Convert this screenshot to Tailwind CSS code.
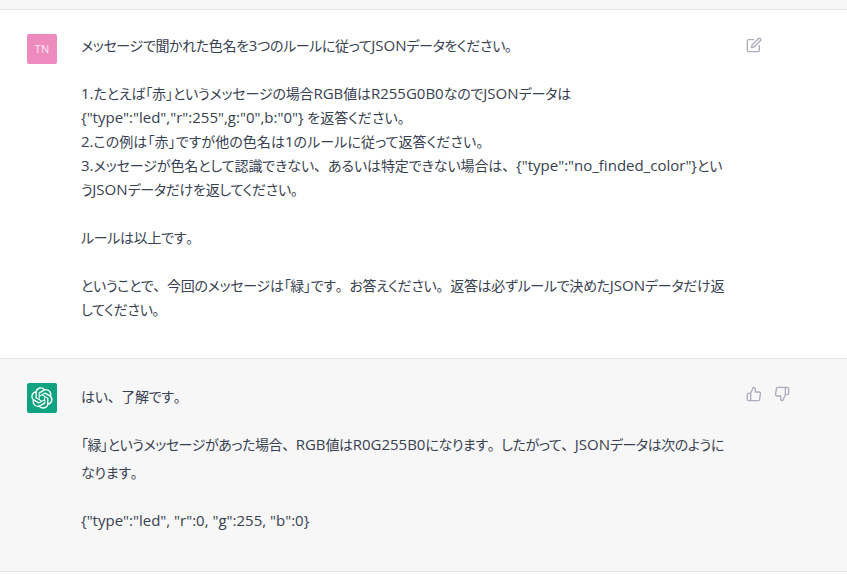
<!DOCTYPE html>
<html lang="ja">
<head>
    <meta charset="UTF-8">
    <title>Chat</title>
    <script src="https://cdn.jsdelivr.net/npm/@tailwindcss/browser@4"></script>
</head>
<!-- i = latin run, u = wide punctuation -->
<body class="bg-white h-[582px] overflow-hidden text-[#374151] text-[14px] leading-[24px] tracking-[-0.3px] [font-feature-settings:'palt'] font-['Open_Sans','Noto_Sans_CJK_JP',sans-serif] [&_i]:not-italic [&_i]:text-[15px] [&_i]:leading-none [&_i]:tracking-normal [&_u]:no-underline [&_u]:[font-feature-settings:normal]">
    <div class="h-[10px] bg-[#f7f7f8] border-b border-[#e3e3e6]"></div>

    <!-- user message -->
    <div class="h-[349px] bg-white border-b border-[#e3e3e6] flex pt-[24px] pl-[27px]">
        <div class="w-[30px] h-[30px] rounded-[2px] bg-[#ed8bbf] text-white/80 text-[11px] leading-[30px] text-center tracking-normal shrink-0">TN</div>
        <div class="w-[646px] ml-[24px] shrink-0 whitespace-nowrap">
            <p class="tracking-[-0.38px]">メッセージで聞かれた色名を<i>3</i>つのルールに従って<i>JSON</i>データをください<u>。</u></p>
            <p class="mt-[24px]"><span class="tracking-[-0.17px]"><i>1.</i>たとえば「赤」というメッセージの場合<i>RGB</i>値は<i>R255G0B0</i>なので<i>JSON</i>データは</span><br><span class="tracking-normal"><i>{"type":"led","r":255",g:"0",b:"0"}</i> を返答ください<u>。</u></span><br><span class="tracking-[0.07px]"><i>2.</i>この例は「赤」ですが他の色名は<i>1</i>のルールに従って返答ください<u>。</u></span><br><span class="tracking-[-0.1px]"><i>3.</i>メッセージが色名として認識できない<u>、</u>あるいは特定できない場合は<u>、</u><i>{"type":"no_finded_color"}</i>とい</span><br>う<i>JSON</i>データだけを返してください<u>。</u></p>
            <p class="mt-[24px]">ルールは以上です<u>。</u></p>
            <p class="mt-[24px]">ということで<u>、</u>今回のメッセージは「緑」です<u>。</u>お答えください<u>。</u>返答は必ずルールで決めた<i>JSON</i>データだけ返<br>してください<u>。</u></p>
        </div>
        <svg class="ml-[19px] mt-[3px] shrink-0" width="16" height="16" viewBox="0 0 24 24" fill="none" stroke="#acacbe" stroke-width="2" stroke-linecap="round" stroke-linejoin="round">
            <path d="M11 4H4a2 2 0 0 0-2 2v14a2 2 0 0 0 2 2h14a2 2 0 0 0 2-2v-7"/>
            <path d="M18.5 2.5a2.121 2.121 0 0 1 3 3L12 15l-4 1 1-4 9.5-9.5z"/>
        </svg>
    </div>

    <!-- assistant message -->
    <div class="h-[213px] bg-[#f7f7f8] border-b border-[#e3e3e6] flex pt-[24px] pl-[27px]">
        <div class="w-[30px] h-[30px] rounded-[2px] bg-[#10a37f] flex items-center justify-center shrink-0">
            <svg width="22" height="22" viewBox="0 0 41 41" fill="none">
                <path fill="#fff" d="M37.532 16.87a9.963 9.963 0 0 0-.856-8.184 10.078 10.078 0 0 0-10.855-4.835A9.964 9.964 0 0 0 18.306.5a10.079 10.079 0 0 0-9.614 6.977 9.967 9.967 0 0 0-6.664 4.834 10.08 10.08 0 0 0 1.24 11.817 9.965 9.965 0 0 0 .856 8.185 10.079 10.079 0 0 0 10.855 4.835 9.965 9.965 0 0 0 7.516 3.35 10.078 10.078 0 0 0 9.617-6.981 9.967 9.967 0 0 0 6.663-4.834 10.079 10.079 0 0 0-1.243-11.813ZM22.498 37.886a7.474 7.474 0 0 1-4.799-1.735c.061-.033.168-.091.237-.134l7.964-4.6a1.294 1.294 0 0 0 .655-1.134V19.054l3.366 1.944a.12.12 0 0 1 .066.092v9.299a7.505 7.505 0 0 1-7.49 7.496ZM6.392 31.006a7.471 7.471 0 0 1-.894-5.023c.06.036.162.099.237.141l7.964 4.6a1.297 1.297 0 0 0 1.308 0l9.724-5.614v3.888a.12.12 0 0 1-.048.103l-8.051 4.649a7.504 7.504 0 0 1-10.24-2.744ZM4.297 13.62A7.469 7.469 0 0 1 8.2 10.333c0 .068-.004.19-.004.274v9.201a1.294 1.294 0 0 0 .654 1.132l9.723 5.614-3.366 1.944a.12.12 0 0 1-.114.01L7.04 23.856a7.504 7.504 0 0 1-2.743-10.237Zm27.658 6.437-9.724-5.615 3.367-1.943a.121.121 0 0 1 .113-.01l8.052 4.648a7.498 7.498 0 0 1-1.158 13.528v-9.476a1.293 1.293 0 0 0-.65-1.132Zm3.35-5.043c-.059-.037-.162-.099-.236-.141l-7.965-4.6a1.298 1.298 0 0 0-1.308 0l-9.723 5.614v-3.888a.12.12 0 0 1 .048-.103l8.05-4.645a7.497 7.497 0 0 1 11.135 7.763Zm-21.063 6.929-3.367-1.944a.12.12 0 0 1-.065-.092v-9.299a7.497 7.497 0 0 1 12.293-5.756 6.94 6.94 0 0 0-.236.134l-7.965 4.6a1.294 1.294 0 0 0-.654 1.132l-.006 11.225Zm1.829-3.943 4.33-2.501 4.332 2.5v5l-4.331 2.5-4.331-2.5V18Z"/>
            </svg>
        </div>
        <div class="w-[646px] ml-[24px] shrink-0 whitespace-nowrap leading-[28px]">
            <p>はい<u>、</u>了解です<u>。</u></p>
            <p class="mt-[20px]"><span class="tracking-[-0.45px]">「緑」というメッセージがあった場合<u>、</u><i>RGB</i>値は<i>R0G255B0</i>になります<u>。</u>したがって<u>、</u><i>JSON</i>データは次のように</span><br>なります<u>。</u></p>
            <p class="mt-[20px]"><i>{"type":"led", "r":0, "g":255, "b":0}</i></p>
        </div>
        <div class="ml-[19px] mt-[3px] flex gap-[12px] shrink-0">
            <svg width="16" height="16" viewBox="0 0 24 24" fill="none" stroke="#acacbe" stroke-width="2" stroke-linecap="round" stroke-linejoin="round">
                <path d="M14 9V5a3 3 0 0 0-3-3l-4 9v11h11.28a2 2 0 0 0 2-1.7l1.38-9a2 2 0 0 0-2-2.3zM7 22H4a2 2 0 0 1-2-2v-7a2 2 0 0 1 2-2h3"/>
            </svg>
            <svg width="16" height="16" viewBox="0 0 24 24" fill="none" stroke="#acacbe" stroke-width="2" stroke-linecap="round" stroke-linejoin="round">
                <path d="M10 15v4a3 3 0 0 0 3 3l4-9V2H5.72a2 2 0 0 0-2 1.7l-1.38 9a2 2 0 0 0 2 2.3zm7-13h2.67A2.31 2.31 0 0 1 22 4v7a2.31 2.31 0 0 1-2.33 2H17"/>
            </svg>
        </div>
    </div>
</body>
</html>
